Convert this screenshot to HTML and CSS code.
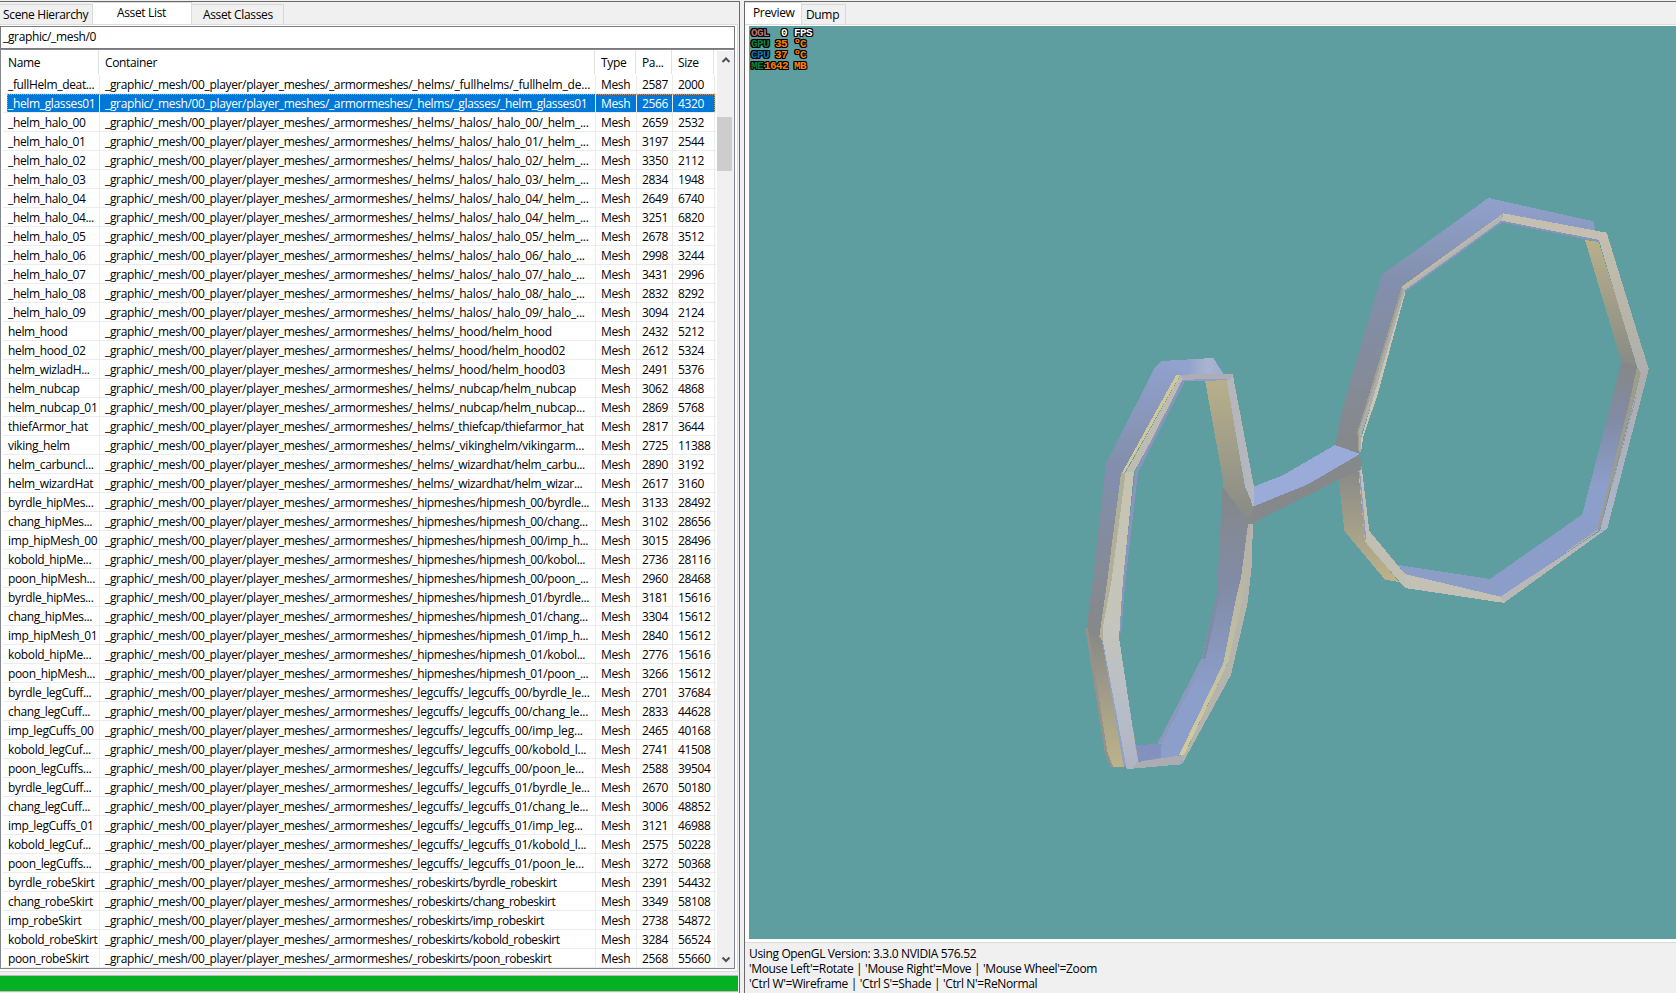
FILE: index.html
```html
<!DOCTYPE html>
<html lang="en">
<head>
<meta charset="utf-8">
<title>Asset Studio</title>
<link rel="stylesheet" href="styles.css">
</head>
<body>
<div class="app">
  <section class="left">
    <nav class="tabs">
      <div class="tab scene">Scene Hierarchy</div>
      <div class="tab active list-tab">Asset List</div>
      <div class="tab classes">Asset Classes</div>
    </nav>
    <div class="page">
      <div class="search">_graphic/_mesh/0</div>
      <div class="list">
        <div class="table">
          <div class="row head"><span>Name</span><span>Container</span><span>Type</span><span>Pa...</span><span>Size</span></div>
          <div id="rows"></div>
        </div>
        <div class="scroll">
          <svg class="arrow" viewBox="0 0 16 16"><path d="M4.5 10.500 8 7l3.500 3.500"/></svg>
          <div class="track"><div class="thumb"></div></div>
          <svg class="arrow" viewBox="0 0 16 16"><path d="M4.5 6 8 9.500 11.500 6"/></svg>
        </div>
      </div>
    </div>
    <div class="progress"></div>
  </section>
  <section class="right">
    <nav class="tabs">
      <div class="tab active preview">Preview</div>
      <div class="tab dump">Dump</div>
    </nav>
    <div class="view">
      <svg class="mesh" viewBox="749 26 927 913" shape-rendering="crispEdges">
        <defs>
          <linearGradient id="v1" x1="0" y1="0" x2="0" y2="1"><stop offset="0" stop-color="#90a1cd"/><stop offset="1" stop-color="#818da8"/></linearGradient>
          <linearGradient id="v2" x1="0" y1="0" x2="0" y2="1"><stop offset="0" stop-color="#828faf"/><stop offset="1" stop-color="#868888"/></linearGradient>
          <linearGradient id="v3" x1="0" y1="0" x2="0" y2="1"><stop offset="0" stop-color="#868887"/><stop offset="1" stop-color="#bdb38a"/></linearGradient>
          <linearGradient id="v4" x1="0" y1="0" x2="0" y2="1"><stop offset="0" stop-color="#b9b08a"/><stop offset="1" stop-color="#858987"/></linearGradient>
          <linearGradient id="v5" x1="0" y1="0" x2="0" y2="1"><stop offset="0" stop-color="#858888"/><stop offset=".35" stop-color="#818ba5"/><stop offset=".75" stop-color="#8c9fcb"/><stop offset="1" stop-color="#8c9fcb"/></linearGradient>
          <linearGradient id="h1"><stop offset="0" stop-color="#8fa1cf"/><stop offset=".5" stop-color="#93a3cf"/><stop offset=".75" stop-color="#aab4d1"/><stop offset="1" stop-color="#9fabd0"/></linearGradient>
          <linearGradient id="c1" x1="0" y1="0" x2="0" y2="1"><stop offset="0" stop-color="#c6c3b0"/><stop offset="1" stop-color="#c4c5bd"/></linearGradient>
          <linearGradient id="c2" x1="0" y1="0" x2="0" y2="1"><stop offset="0" stop-color="#c2c3bd"/><stop offset=".5" stop-color="#b8bec8"/><stop offset="1" stop-color="#aeb4c4"/></linearGradient>
          <linearGradient id="c3" x1="0" y1="0" x2="0" y2="1"><stop offset="0" stop-color="#c4bfae"/><stop offset=".7" stop-color="#b4b3a9"/><stop offset="1" stop-color="#adafb0"/></linearGradient>
          <linearGradient id="c4" x1="0" y1="0" x2="0" y2="1"><stop offset="0" stop-color="#b0b0a6"/><stop offset="1" stop-color="#d3ca9d"/></linearGradient>
          <linearGradient id="c5" x1="0" y1="0" x2="0" y2="1"><stop offset="0" stop-color="#adadab"/><stop offset="1" stop-color="#adb5cc"/></linearGradient>
        </defs>
        <g transform="translate(1310 180) scale(.33333)">
          <polygon fill="url(#v1)" points="535,54 850,124 857,154 866,185 580,125 284,335 275,330 215,285"/>
          <polygon fill="url(#v2)" points="215,285 275,320 172,660 142,755 148,820 75,797 90,720 105,660"/>
          <polygon fill="#c0bb9c" points="580,100 575,110 279,330 275,320"/>
          <polygon fill="#b2b4b8" points="577,106 575,122 284,335 277,328"/>
          <path d="M575 125 284 334" stroke="#8796bd" stroke-width="5" fill="none"/>
          <polygon fill="#a19e8a" points="275,320 279,326 178,660 148,760 150,810 145,810 142,755 172,660"/>
          <polygon fill="#aaaeb3" points="279,326 284,335 192,650 155,760 152,815 147,815 146,755 178,660"/>
          <polygon fill="#cbc6af" points="284,335 284,345 204,640 160,770 154,810 152,780 188,660"/>
          <polygon fill="url(#v4)" points="825,180 866,185 988,575 935,547"/>
          <polygon fill="url(#v5)" points="935,543 985,565 960,660 862,1048 817,1003 905,660"/>
          <polygon fill="#8b9dc8" points="817,1003 870,1050 572,1252 540,1197"/>
          <polygon fill="#8c9dc6" points="265,1155 540,1197 572,1252 285,1184"/>
          <polygon fill="#c4bfb0" points="580,100 890,158 870,180 575,123"/>
          <path d="M575 125 866 183" stroke="#8795ba" stroke-width="6" fill="none"/>
          <polygon fill="url(#c3)" points="866,178 890,158 1017,570 990,590"/>
          <polygon fill="#9f9c89" points="981,560 992,580 868,1050 862,1045 960,660"/>
          <polygon fill="url(#c5)" points="992,582 1017,566 1000,630 892,1045 870,1053"/>
          <path d="M978 650 868 1050" stroke="#8998b9" stroke-width="4" fill="none" stroke-dasharray="8 5"/>
          <polygon fill="#b9b8b9" points="868,1054 892,1045 583,1268 570,1251"/>
          <path d="M865 1050 770 1115" stroke="#c3b98e" stroke-width="3" fill="none"/>
          <polygon fill="#c3c0b6" points="283,1182 572,1250 583,1268 570,1267 285,1224"/>
          <polygon fill="url(#v3)" points="82,860 150,850 165,1080 267,1206 225,1199 103,1053"/>
          <polygon fill="#c1beb3" points="144,860 155,860 178,1053 285,1182 285,1224 165,1085"/>
          <path d="M148 870 167 1080" stroke="#929eb8" stroke-width="4" fill="none"/>
        </g>
        <g transform="translate(1070 340) scale(.33333)">
          <polygon fill="url(#h1)" points="254,84 274,63 430,54 462,104 330,112"/>
          <polygon fill="url(#v1)" points="254,84 274,63 345,106 320,110 155,402 108,370"/>
          <polygon fill="url(#v2)" points="108,370 158,398 115,720 92,892 50,865 68,720"/>
          <polygon fill="url(#v3)" points="50,865 92,886 98,910 162,1280 125,1281 108,1235"/>
          <path d="M50 865 108 1235 125 1281" stroke="#96928b" stroke-width="8" fill="none"/>
          <polygon fill="#94a2c1" points="94,890 110,960 172,1280 160,1276"/>
          <polygon fill="url(#v5)" points="458,435 545,500 538,552 520,690 500,775 462,970 329,1248 205,1265 196,1216 262,1212 395,955 444,750 444,700"/>
          <path d="M448 750 401 957" stroke="#818ba6" stroke-width="10" fill="none"/>
          <path d="M401 957 268 1211" stroke="#8b99bd" stroke-width="11" fill="none"/>
          <polygon fill="#8292bd" points="196,1216 275,1211 272,1254 205,1264"/>
          <polygon fill="#b3ab84" points="164,1065 190,1170 205,1265 192,1264"/>
          <polygon fill="#d0c79b" points="318,106 331,105 165,396 155,400"/>
          <polygon fill="#bebbb0" points="331,106 342,122 192,396 168,396"/>
          <path d="M341 122 200 395 162 720 149 880" stroke="#8995bb" stroke-width="9" fill="none"/>
          <polygon fill="#b1ae9a" points="153,400 169,396 130,720 98,905 88,890 112,720"/>
          <polygon fill="url(#c1)" points="167,396 192,395 159,720 147,895 98,910 99,860 125,720"/>
          <polygon fill="url(#c2)" points="98,900 147,892 196,1216 192,1210 162,1062 205,1265 188,1287 170,1287"/>
          <polygon fill="url(#v4)" points="405,120 470,118 550,500 545,555 458,440 458,415"/>
          <polygon fill="#b0b6c3" points="470,120 479,122 550,497 525,440"/>
          <polygon fill="#b5b7bb" points="472,112 488,102 552,440 552,498 546,498"/>
          <polygon fill="#acaeb4" points="330,106 372,102 488,102 480,120 340,122"/>
          <path d="M340 121 472 119" stroke="#8c9dca" stroke-width="4" fill="none"/>
          <polygon fill="url(#c4)" points="534,552 544,552 533,700 515,790 475,965 341,1247 327,1246 460,970 498,775 513,715"/>
          <polygon fill="#b4b4ac" points="541,552 549,552 545,680 533,788 483,1005 335,1275 343,1244 475,965 515,790 532,700"/>
          <polygon fill="#abadb3" points="202,1266 327,1247 343,1246 335,1273 188,1286"/>
          <polygon fill="#9aabda" points="552,440 640,405 795,315 870,342 710,435 552,500"/>
          <polygon fill="#86898c" points="548,500 710,435 870,342 875,388 805,420 545,552"/>
        </g>
      </svg>
      <div class="osd">
        <div><i class="ogl">OGL</i><i class="val white">  0</i><i class="unit white">FPS</i></div>
        <div><i class="gpu">GPU</i><i class="val"> 35</i><i class="unit">ºC</i></div>
        <div><i class="cpu">CPU</i><i class="val"> 37</i><i class="unit">ºC</i></div>
        <div><i class="gpu mem">ME</i><i class="val wide">1642</i><i class="unit">MB</i></div>
      </div>
    </div>
    <footer class="status">
      <div>Using OpenGL Version: 3.3.0 NVIDIA 576.52</div>
      <div>'Mouse Left'=Rotate | 'Mouse Right'=Move | 'Mouse Wheel'=Zoom</div>
      <div>'Ctrl W'=Wireframe | 'Ctrl S'=Shade | 'Ctrl N'=ReNormal</div>
    </footer>
  </section>
</div>
<script src="rows.js"></script>
</body>
</html>
```
FILE: styles.css
```css
* { box-sizing: border-box; }
body { margin: 0; background: #f0f0f0; color: #000; font: 12px/15px "Open Sans", "Noto Sans", sans-serif; letter-spacing: -0.35px; overflow: hidden; }
.app { display: flex; width: 1676px; height: 993px; gap: 4px; }
.left { width: 740px; flex: none; border: solid #696969; border-width: 1px 1px 0 0; margin-top: 1px; display: flex; flex-direction: column; }
.right { flex: 1; border: solid #696969; border-width: 1px 0 0 1px; margin-top: 1px; display: flex; flex-direction: column; }
.tabs { height: 22px; display: flex; align-items: flex-end; flex: none; }
.tab { height: 20px; border: 1px solid #d9d9d9; border-left: 0; border-bottom: 0; padding: 2px 0 0; white-space: pre; }
.tab.active { background: #fff; height: 22px; border-color: #dcdcdc; padding-top: 2px; }
.scene { width: 93px; padding-left: 3px; }
.list-tab { width: 99px; padding-left: 24px; }
.classes { width: 92px; padding-left: 11px; }
.page { width: 738px; height: 948px; background: #fff; border: solid #dcdcdc; border-width: 1px 1px 1px 0; padding: 1px 2px 0 0; flex: none; }
.search { height: 23px; border: 1px solid #7a7a7a; padding: 2px 2px 0; }
.list { height: 920px; border: 1px solid #828790; display: flex; justify-content: space-between; }
.table { width: 714px; }
.row { display: grid; grid-template-columns: 93px 496px 41px 36px 42px; margin-left: 2px; width: 713px; padding-left: 4px; height: 19px; border-bottom: 1px solid #ececec; }
.row > span { border-right: 1px solid #ececec; padding: 2px 0 0 5px; height: 18px; white-space: pre; overflow: hidden; }
.row > span:first-child { padding-left: 1px; }
.row.head { height: 25px; border-bottom: 0; margin-left: 1px; }
.row.head > span { height: 24px; padding-top: 5px; padding-left: 6px; border-color: #e2e2e2; }
.row.head > span:first-child { padding-left: 2px; }
.row.sel > span { background: #0078d7; color: #fff; border-top: 1px dotted #ff8728; padding-top: 1px; }
.row.sel > span:first-child { border-left: 1px dotted #ff8728; padding-left: 0; }
.row.sel > span:last-child { border-right: 1px dotted #ff8728; }
.wide-tail { letter-spacing: -0.25px; }
.wider-tail { letter-spacing: -0.2px; }
.tight-tail { letter-spacing: -0.45px; }
.scroll { width: 17px; background: #f0f0f0; display: flex; flex-direction: column; align-items: center; margin-top: 1px; }
.arrow { width: 16px; height: 17px; fill: none; stroke: #505050; stroke-width: 2; flex: none; }
.track { flex: 1; padding-top: 49px; width: 17px; }
.thumb { width: 15px; height: 54px; background: #cdcdcd; }
.progress { width: 738px; height: 17px; margin-top: 3px; background: #06b025; border: solid #bcbcbc; border-width: 1px 0; }
.preview { width: 57px; padding-left: 8px; }
.dump { width: 44px; padding-left: 4px; }
.view { height: 919px; border: solid #dcdcdc; border-width: 1px 0; background: #fff; padding: 1px 0 3px 4px; display: grid; flex: none; }
.mesh { grid-area: 1 / 1; width: 927px; height: 913px; background: #5f9ea0; display: block; }
.osd { grid-area: 1 / 1; align-self: start; padding: 2px 0 0 2px; font: bold 11px/11px "Liberation Mono", monospace; letter-spacing: -0.6px; color: #ff8000; text-shadow: 1px 0 #000, -1px 0 #000, 0 1px #000, 0 -1px #000, 1px 1px #000, -1px -1px #000, 1px -1px #000, -1px 1px #000; }
.osd div { display: flex; height: 11px; }
.osd i { font-style: normal; width: 18px; white-space: pre; }
.osd .val { width: 25px; }
.osd i.mem { width: 13px; }
.osd i.wide { width: 30px; }
.osd .ogl { color: #b9706f; }
.osd .gpu { color: #107c40; }
.osd .cpu { color: #0f70b7; }
.osd .white { color: #fff; }
.status { padding: 3px 0 0 4px; }
```
FILE: rows.js
```javascript
const root = "_graphic/_mesh/00_player/player_meshes/_armormeshes/";
const data = `_fullHelm_deat...|_helms/_fullhelms/_fullhelm_de...|2587|2000
_helm_glasses01|_helms/_glasses/_helm_glasses01|2566|4320
_helm_halo_00|_helms/_halos/_halo_00/_helm_...|2659|2532
_helm_halo_01|_helms/_halos/_halo_01/_helm_...|3197|2544
_helm_halo_02|_helms/_halos/_halo_02/_helm_...|3350|2112
_helm_halo_03|_helms/_halos/_halo_03/_helm_...|2834|1948
_helm_halo_04|_helms/_halos/_halo_04/_helm_...|2649|6740
_helm_halo_04...|_helms/_halos/_halo_04/_helm_...|3251|6820
_helm_halo_05|_helms/_halos/_halo_05/_helm_...|2678|3512
_helm_halo_06|_helms/_halos/_halo_06/_halo_...|2998|3244
_helm_halo_07|_helms/_halos/_halo_07/_halo_...|3431|2996
_helm_halo_08|_helms/_halos/_halo_08/_halo_...|2832|8292
_helm_halo_09|_helms/_halos/_halo_09/_halo_...|3094|2124
helm_hood|_helms/_hood/helm_hood|2432|5212
helm_hood_02|_helms/_hood/helm_hood02|2612|5324
helm_wizladH...|_helms/_hood/helm_hood03|2491|5376
helm_nubcap|_helms/_nubcap/helm_nubcap|3062|4868
helm_nubcap_01|_helms/_nubcap/helm_nubcap...|2869|5768
thiefArmor_hat|_helms/_thiefcap/thiefarmor_hat|2817|3644
viking_helm|_helms/_vikinghelm/vikingarm...|2725|11388
helm_carbuncl...|_helms/_wizardhat/helm_carbu...|2890|3192
helm_wizardHat|_helms/_wizardhat/helm_wizar...|2617|3160
byrdle_hipMes...|_hipmeshes/hipmesh_00/byrdle...|3133|28492
chang_hipMes...|_hipmeshes/hipmesh_00/chang...|3102|28656
imp_hipMesh_00|_hipmeshes/hipmesh_00/imp_h...|3015|28496
kobold_hipMe...|_hipmeshes/hipmesh_00/kobol...|2736|28116
poon_hipMesh...|_hipmeshes/hipmesh_00/poon_...|2960|28468
byrdle_hipMes...|_hipmeshes/hipmesh_01/byrdle...|3181|15616
chang_hipMes...|_hipmeshes/hipmesh_01/chang...|3304|15612
imp_hipMesh_01|_hipmeshes/hipmesh_01/imp_h...|2840|15612
kobold_hipMe...|_hipmeshes/hipmesh_01/kobol...|2776|15616
poon_hipMesh...|_hipmeshes/hipmesh_01/poon_...|3266|15612
byrdle_legCuff...|_legcuffs/_legcuffs_00/byrdle_le...|2701|37684
chang_legCuff...|_legcuffs/_legcuffs_00/chang_le...|2833|44628
imp_legCuffs_00|_legcuffs/_legcuffs_00/imp_leg...|2465|40168
kobold_legCuf...|_legcuffs/_legcuffs_00/kobold_l...|2741|41508
poon_legCuffs...|_legcuffs/_legcuffs_00/poon_le...|2588|39504
byrdle_legCuff...|_legcuffs/_legcuffs_01/byrdle_le...|2670|50180
chang_legCuff...|_legcuffs/_legcuffs_01/chang_le...|3006|48852
imp_legCuffs_01|_legcuffs/_legcuffs_01/imp_leg...|3121|46988
kobold_legCuf...|_legcuffs/_legcuffs_01/kobold_l...|2575|50228
poon_legCuffs...|_legcuffs/_legcuffs_01/poon_le...|3272|50368
byrdle_robeSkirt|_robeskirts/byrdle_robeskirt|2391|54432
chang_robeSkirt|_robeskirts/chang_robeskirt|3349|58108
imp_robeSkirt|_robeskirts/imp_robeskirt|2738|54872
kobold_robeSkirt|_robeskirts/kobold_robeskirt|3284|56524
poon_robeSkirt|_robeskirts/poon_robeskirt|2568|55660`;

// Letter spacing of the folder part, by folder
const tailClass = path => {
  if (/_legcuffs|_viking|_fullhelms/.test(path)) return "wider-tail";
  if (/_halos|_hood|_nubcap/.test(path)) return "wide-tail";
  if (/_robeskirts/.test(path)) return "tight-tail";
  return "tail";
};

document.getElementById("rows").innerHTML = data.split("\n").map((line, i) => {
  const [name, path, id, size] = line.split("|");
  const container = `${root}<span class="${tailClass(path)}">${path}</span>`;
  const cells = [name, container, "Mesh", id, size].map(t => `<span>${t}</span>`).join("");
  return `<div class="row${i === 1 ? " sel" : ""}">${cells}</div>`;
}).join("");
```
